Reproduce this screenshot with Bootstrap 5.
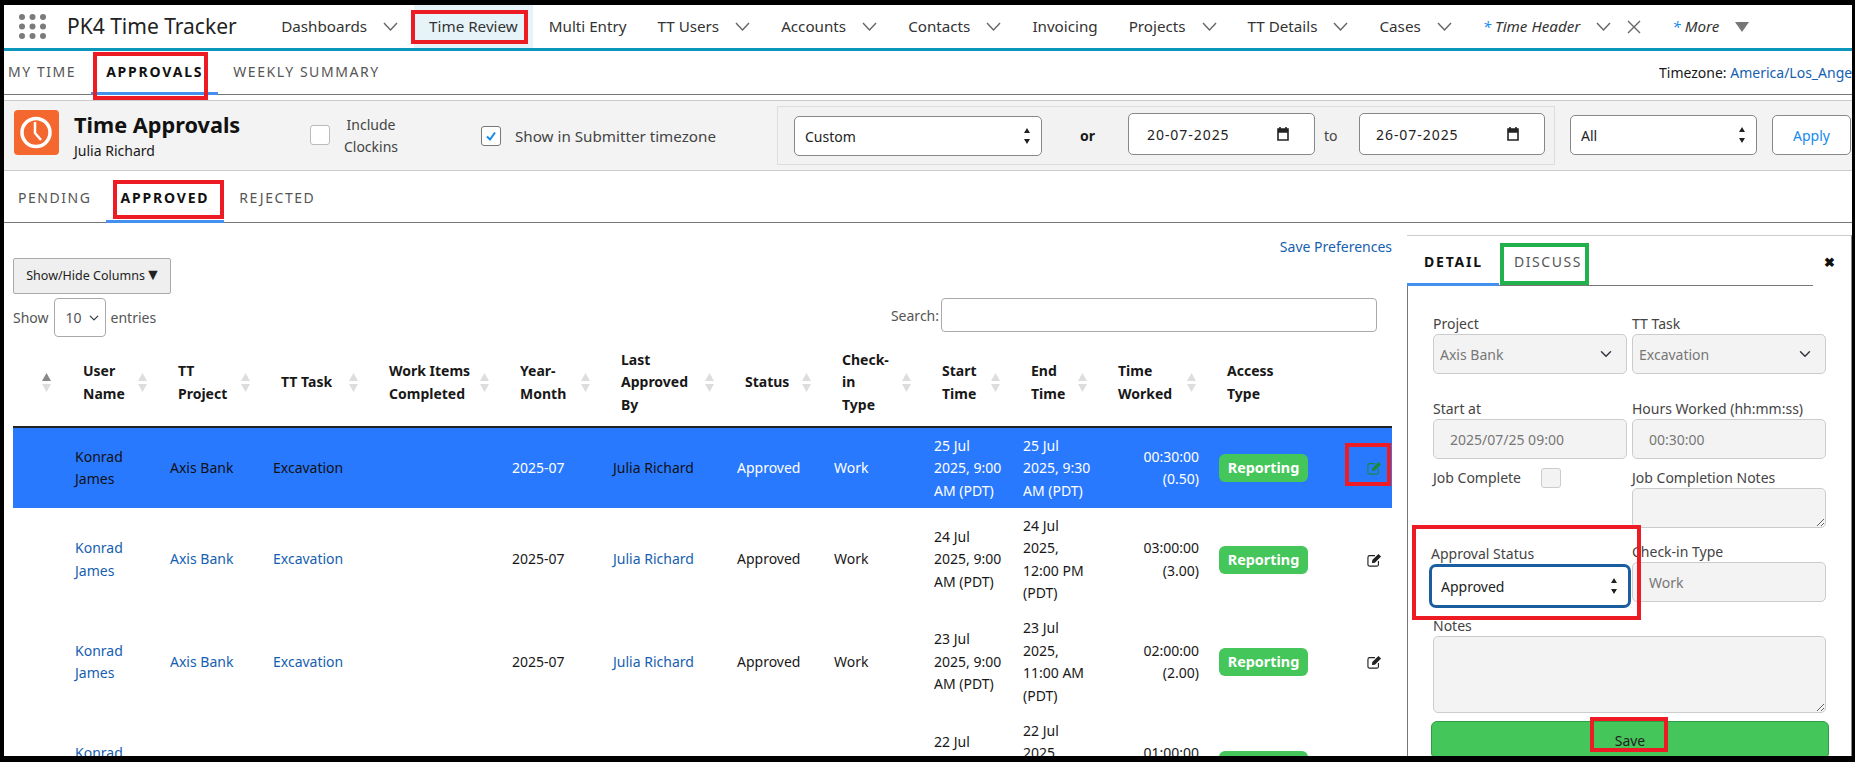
<!DOCTYPE html>
<html lang="en"><head><meta charset="utf-8"><title>PK4 Time Tracker</title>
<link href="https://cdn.jsdelivr.net/npm/bootstrap@5.3.0/dist/css/bootstrap.min.css" rel="stylesheet">
<script src="https://cdn.jsdelivr.net/npm/bootstrap@5.3.0/dist/js/bootstrap.bundle.min.js"></script>
<style>
html,body{height:762px;overflow:hidden;background:#000;}
body{font-family:"Noto Sans","Open Sans",sans-serif;font-size:14px;color:#181818;position:relative;}
a{color:#1560b0;text-decoration:none;}
.tt-frame{margin:5px 3px 0 4px;height:751px;background:#fff;overflow:hidden;display:flex;flex-direction:column;}
.tt-nav{height:46px;flex:none;border-bottom:3px solid #0a97ba;padding:0;flex-wrap:nowrap;justify-content:flex-start;}
.tt-dots{margin-left:15px;width:27px;height:25px;color:#7b7b7b;flex:none;}
.tt-brand{font-size:21px;margin:0 29px 0 21px;color:#222;line-height:1;white-space:nowrap;}
.tt-item{display:flex;align-items:center;height:43px;padding:0 15.5px;font-size:15.2px;color:#333;white-space:nowrap;}
.tt-item.tt-active{background:#e6f3f8;}
.tt-item svg{flex:none;}
.tt-chev{width:15px;height:9px;margin-left:16px;color:#666;}
.tt-item em .tt-star{color:#1589ee;}
.tt-tabs{flex:none;display:flex;align-items:stretch;background:#fff;border-bottom:1px solid #777;}
.tt-tab{display:flex;align-items:center;font-size:14px;letter-spacing:1.55px;color:#555;white-space:nowrap;border-bottom:3px solid transparent;margin-bottom:-1px;padding-left:15px;padding-right:15px;}
.tt-tab.tt-on{font-weight:700;color:#111;border-bottom-color:#4390ee;letter-spacing:1.8px;}
.tt-main-tabs{height:44px;}
.tt-main-tabs .tt-tab:first-child{padding-left:4px;}
.tt-tz{margin-left:auto;width:193px;overflow:hidden;white-space:nowrap;align-self:center;font-size:14px;}
.tt-band{flex:none;height:71px;margin-top:5px;background:#f3f3f3;border-top:1px solid #ccc;border-bottom:1px solid #ccc;display:flex;align-items:flex-start;}
.tt-logo{width:45px;height:45px;margin:9px 0 0 10px;flex:none;}
.tt-titleblk{width:236px;margin:10px 0 0 15px;flex:none;}
.tt-title{font-size:21.7px;font-weight:700;line-height:28px;color:#111;margin:0;}
.tt-sub{font-size:14px;line-height:19px;margin-top:2px;}
.tt-chk{width:20px;height:20px;background:#fff;border:1px solid #bbb;border-radius:3px;flex:none;display:flex;align-items:center;justify-content:center;}
.tt-chk1{margin-top:24px;}
.tt-inc{width:80px;text-align:center;margin:13px 71px 0 0;padding-left:2px;font-size:14px;line-height:22px;flex:none;color:#444;}
.tt-chk2{margin-top:25px;border-color:#777;}
.tt-show{margin:25px 59px 0 14px;width:203px;font-size:15.2px;line-height:20px;color:#444;white-space:nowrap;flex:none;}
.tt-box{width:778px;height:59px;margin-top:5px;border:1px solid #ddd;flex:none;display:flex;align-items:flex-start;background:#f2f2f2;}
.form-select.tt-ctl,.form-control.tt-ctl{font-size:14px;color:#222;border:1px solid #888;border-radius:5px;padding:0 10px;height:40px;box-shadow:none;}
.form-select.tt-spin{background-image:url("data:image/svg+xml,%3Csvg xmlns='http://www.w3.org/2000/svg' viewBox='0 0 8 18'%3E%3Cpath d='M4 1l3 5H1zM4 17l3-5H1z' fill='%23222'/%3E%3C/svg%3E");background-size:8px 18px;background-position:right 10px center;}
.tt-date{background-image:url("data:image/svg+xml,%3Csvg xmlns='http://www.w3.org/2000/svg' viewBox='0 0 12 14'%3E%3Cpath d='M1 2h10v11H1zM1 2v3h10V2M3 0v2M9 0v2' fill='none' stroke='%23222' stroke-width='1.6'/%3E%3Crect x='1' y='2' width='10' height='3' fill='%23222'/%3E%3C/svg%3E");background-repeat:no-repeat;background-size:12px 14px;background-position:right 25px center;}
.tt-custom{width:248px;margin:9px 0 0 16px;flex:none;}
.tt-or{width:86px;padding-left:5px;text-align:center;font-weight:700;margin-top:18px;flex:none;font-size:14px;}
.form-control.tt-d1{width:187px;height:42px;margin-top:6px;flex:none;padding-left:18px;letter-spacing:.95px;}
.tt-to{width:44px;padding-left:9px;margin-top:18px;flex:none;color:#444;}
.form-control.tt-d2{width:186px;height:42px;margin-top:6px;flex:none;padding-left:16px;letter-spacing:.95px;}
.tt-all{width:187px;margin:14px 0 0 15px;flex:none;}
.btn.tt-apply{width:79px;height:40px;margin:14px 0 0 15px;background:#fff;border:1px solid #888;border-radius:5px;font-size:14px;color:#1589ee;padding:0;flex:none;}
.tt-sub-tabs{height:52px;}
.tt-sub-tabs .tt-tab{padding-top:4px;}
.tt-sub-tabs .tt-tab:first-child{padding-left:14px;padding-right:14px;}
.tt-content{flex:1 1 auto;min-height:0;display:flex;overflow:hidden;}
.tt-left{width:1388px;padding-left:9px;flex:none;}
.tt-savep{height:35px;padding-top:14px;text-align:right;line-height:20px;font-size:14px;}
.btn.tt-cols{width:158px;height:36px;background:#efefef;border:1px solid #aaa;border-radius:2px;font-size:12.500px;color:#222;padding:0 0 0 3px;white-space:nowrap;display:block;}
.tt-tri{font-size:16px;line-height:1;}
.tt-lenrow{height:41px;margin-top:4px;display:flex;align-items:flex-start;color:#555;}
.tt-lenrow label{display:flex;align-items:center;gap:5px;}
.form-select.tt-len{width:52px;height:39px;border:1px solid #aaa;border-radius:4px;font-size:14px;padding:0 0 0 11px;color:#555;background-position:right 4px center;background-size:14px 10px;box-shadow:none;}
.form-control.tt-search{width:436px;height:34px;border:1px solid #aaa;border-radius:4px;margin-left:0;box-shadow:none;}
.tt-lenrow label.tt-findlbl{margin-left:auto;margin-right:15px;height:34px;gap:2px;}
.tt-table-in{table-layout:fixed;width:1379px;margin:0;--bs-table-bg:transparent;color:#181818;}
.table.tt-table-in>thead>tr>th{padding:10px 13px 10px 18px;font-size:14px;font-weight:700;line-height:22.4px;vertical-align:middle;border-bottom:2px solid #222;}
.table.tt-table-in>thead>tr>th.tt-sortonly{padding:10px 14px 10px 0;}
.table.tt-table-in>tbody>tr>td{padding:6.3px 10px;line-height:22.5px;vertical-align:middle;border:0;font-size:14px;white-space:nowrap;}
.table.tt-table-in>tbody>tr.tt-sel>td{background:#2979ff;color:#fff;}
.tt-sel a{color:#111;}
.tt-hd{display:flex;align-items:center;justify-content:space-between;}
.tt-sort{flex:none;width:9px;height:19px;color:#ddd;}
.tt-rep{display:inline-block;background:#45c65a;color:#fff;font-weight:700;border-radius:6px;height:28px;line-height:28px;width:89px;text-align:center;font-size:14.4px;}
.tt-edit{width:15px;height:14px;color:#222;display:block;margin-left:auto;}
.tt-sel .tt-edit{color:#1a8a3c;}
.tt-panel{width:445px;margin:12px 0 0 15px;flex:none;border-top:1px solid #ccc;border-right:1px solid #888;position:relative;}
.tt-ptabs{height:50px;margin-right:38px;}
.tt-ptabs .tt-tab{padding:3px 16px 0 17px;}
.tt-ptabs .tt-tab+.tt-tab{padding-left:15px;}
.tt-close{position:absolute;right:16px;top:16px;font-size:13px;font-weight:700;line-height:20px;color:#111;}
.tt-pbody{border-left:1px solid #777;padding:27px 25px 0 25px;height:480px;}
.tt-fg{display:grid;grid-template-columns:194px 194px;column-gap:5px;}
.tt-fg label{display:block;color:#444;font-size:14px;line-height:21px;white-space:nowrap;}
.form-control.tt-dis,.form-select.tt-dis{background-color:#f3f3f3;border:1px solid #ccc;border-radius:5px;color:#777;font-size:14px;height:40px;opacity:1;padding:0 6px;box-shadow:none;}
.form-control.tt-dis.tt-ind{padding-left:16px;}
.form-control.tt-notes{resize:vertical;}
.tt-jc{display:flex;align-items:flex-start;}
.tt-jc .tt-chk{background:#f3f3f3;border-color:#ccc;margin:1px 0 0 20px;}
.form-select.tt-appr{width:202px;height:44px;margin-left:-4px;border:3px solid #1b5e9f;border-radius:7px;font-size:14px;color:#222;padding:0 9px;box-shadow:none;}
.tt-fg label.tt-applbl{margin-left:-2px;margin-top:15px;}
.tt-rowgap{margin-top:13px;}
.tt-noteslbl{color:#444;line-height:20px;display:block;}
.form-control.tt-nh{height:77px;}
.btn.tt-save{width:398px;height:38px;margin:8px 0 0 -2px;background:#45c65a;border:1px solid #2f9e44;border-radius:6px;color:#222;font-size:14px;display:block;padding:0;}
.tt-ann{position:absolute;border:4px solid #ed1c24;pointer-events:none;}
.tt-ann.tt-green{border-color:#22b14c;}
</style></head>
<body>
<div class="tt-frame">
  <nav class="navbar tt-nav">
    <svg class="tt-dots" viewBox="0 0 27 25" fill="currentColor"><circle cx="3" cy="3" r="3"/><circle cx="13.500" cy="3" r="3"/><circle cx="24" cy="3" r="3"/><circle cx="3" cy="12.500" r="3"/><circle cx="13.500" cy="12.500" r="3"/><circle cx="24" cy="12.500" r="3"/><circle cx="3" cy="22" r="3"/><circle cx="13.500" cy="22" r="3"/><circle cx="24" cy="22" r="3"/></svg>
    <span class="tt-brand">PK4 Time Tracker</span>
    <a class="tt-item" href="#">Dashboards<svg class="tt-chev" viewBox="0 0 15 9" fill="none" stroke="currentColor" stroke-width="1.4"><path d="M1 1l6.500 7L14 1"/></svg></a>
    <a class="tt-item tt-active" href="#">Time Review</a>
    <a class="tt-item" href="#">Multi Entry</a>
    <a class="tt-item" href="#">TT Users<svg class="tt-chev" viewBox="0 0 15 9" fill="none" stroke="currentColor" stroke-width="1.4"><path d="M1 1l6.500 7L14 1"/></svg></a>
    <a class="tt-item" href="#">Accounts<svg class="tt-chev" viewBox="0 0 15 9" fill="none" stroke="currentColor" stroke-width="1.4"><path d="M1 1l6.500 7L14 1"/></svg></a>
    <a class="tt-item" href="#">Contacts<svg class="tt-chev" viewBox="0 0 15 9" fill="none" stroke="currentColor" stroke-width="1.4"><path d="M1 1l6.500 7L14 1"/></svg></a>
    <a class="tt-item" href="#">Invoicing</a>
    <a class="tt-item" href="#">Projects<svg class="tt-chev" viewBox="0 0 15 9" fill="none" stroke="currentColor" stroke-width="1.4"><path d="M1 1l6.500 7L14 1"/></svg></a>
    <a class="tt-item" href="#">TT Details<svg class="tt-chev" viewBox="0 0 15 9" fill="none" stroke="currentColor" stroke-width="1.4"><path d="M1 1l6.500 7L14 1"/></svg></a>
    <a class="tt-item" href="#">Cases<svg class="tt-chev" viewBox="0 0 15 9" fill="none" stroke="currentColor" stroke-width="1.4"><path d="M1 1l6.500 7L14 1"/></svg></a>
    <a class="tt-item" href="#"><em><span class="tt-star">*</span> Time Header</em><svg class="tt-chev" viewBox="0 0 15 9" fill="none" stroke="currentColor" stroke-width="1.4"><path d="M1 1l6.500 7L14 1"/></svg><svg class="ms-3" width="14" height="14" viewBox="0 0 14 14" fill="none" stroke="#666" stroke-width="1.4"><path d="M1 1l12 12M13 1L1 13"/></svg></a>
    <a class="tt-item" href="#"><em><span class="tt-star">*</span> More</em><svg class="ms-3" width="14" height="10" viewBox="0 0 14 10" fill="#777"><path d="M0 0h14L7 10z"/></svg></a>
  </nav>
  <div class="tt-tabs tt-main-tabs">
    <a class="tt-tab" href="#">MY TIME</a>
    <a class="tt-tab tt-on" href="#">APPROVALS</a>
    <a class="tt-tab" href="#">WEEKLY SUMMARY</a>
    <div class="tt-tz">Timezone: <a href="#">America/Los_Angeles</a></div>
  </div>
  <div class="tt-band">
    <svg class="tt-logo" viewBox="0 0 45 45"><rect width="45" height="45" rx="4" fill="#f4672f"/><circle cx="22" cy="22.500" r="14" fill="none" stroke="#fff" stroke-width="3.500"/><path d="M21 12v11l6 7" fill="none" stroke="#fff" stroke-width="2.500"/></svg>
    <div class="tt-titleblk"><h1 class="tt-title">Time Approvals</h1><div class="tt-sub">Julia Richard</div></div>
    <span class="tt-chk tt-chk1"></span>
    <div class="tt-inc">Include<br>Clockins</div>
    <span class="tt-chk tt-chk2"><svg width="12" height="12" viewBox="0 0 12 12" fill="none" stroke="#1589ee" stroke-width="2"><path d="M2 6.500l3 3 5-7"/></svg></span>
    <div class="tt-show">Show in Submitter timezone</div>
    <div class="tt-box">
      <select class="form-select tt-ctl tt-spin tt-custom"><option>Custom</option></select>
      <div class="tt-or">or</div>
      <input class="form-control tt-ctl tt-date tt-d1" type="text" value="20-07-2025">
      <div class="tt-to">to</div>
      <input class="form-control tt-ctl tt-date tt-d2" type="text" value="26-07-2025">
    </div>
    <select class="form-select tt-ctl tt-spin tt-all"><option>All</option></select>
    <button class="btn tt-apply" type="button">Apply</button>
  </div>
  <div class="tt-tabs tt-sub-tabs">
    <a class="tt-tab" href="#">PENDING</a>
    <a class="tt-tab tt-on" href="#">APPROVED</a>
    <a class="tt-tab" href="#">REJECTED</a>
  </div>
  <div class="tt-content">
    <div class="tt-left">
      <div class="tt-savep"><a href="#">Save Preferences</a></div>
      <button class="btn tt-cols" type="button">Show/Hide Columns<span class="tt-tri">▼</span></button>
      <div class="tt-lenrow">
        <label>Show <select class="form-select tt-len"><option>10</option></select> entries</label>
        <label class="tt-findlbl">Search:<input class="form-control tt-search" type="text"></label>
      </div>
      <table class="table tt-table-in">
        <colgroup><col style="width:52px"><col style="width:95px"><col style="width:103px"><col style="width:108px"><col style="width:131px"><col style="width:101px"><col style="width:124px"><col style="width:97px"><col style="width:100px"><col style="width:89px"><col style="width:87px"><col style="width:109px"><col style="width:126px"><col style="width:57px"></colgroup>
        <thead><tr>
          <th class="tt-sortonly"><div class="tt-hd"><span></span><svg class="tt-sort" viewBox="0 0 9 19"><path d="M4.500 0L9 8H0z" fill="#888"/><path d="M4.500 19L9 11H0z" fill="#ddd"/></svg></div></th>
          <th><div class="tt-hd"><span>User<br>Name</span><svg class="tt-sort" viewBox="0 0 9 19" fill="currentColor"><path d="M4.500 0L9 8H0zM4.500 19L9 11H0z"/></svg></div></th>
          <th><div class="tt-hd"><span>TT<br>Project</span><svg class="tt-sort" viewBox="0 0 9 19" fill="currentColor"><path d="M4.500 0L9 8H0zM4.500 19L9 11H0z"/></svg></div></th>
          <th><div class="tt-hd"><span>TT Task</span><svg class="tt-sort" viewBox="0 0 9 19" fill="currentColor"><path d="M4.500 0L9 8H0zM4.500 19L9 11H0z"/></svg></div></th>
          <th><div class="tt-hd"><span>Work Items<br>Completed</span><svg class="tt-sort" viewBox="0 0 9 19" fill="currentColor"><path d="M4.500 0L9 8H0zM4.500 19L9 11H0z"/></svg></div></th>
          <th><div class="tt-hd"><span>Year-<br>Month</span><svg class="tt-sort" viewBox="0 0 9 19" fill="currentColor"><path d="M4.500 0L9 8H0zM4.500 19L9 11H0z"/></svg></div></th>
          <th><div class="tt-hd"><span>Last<br>Approved<br>By</span><svg class="tt-sort" viewBox="0 0 9 19" fill="currentColor"><path d="M4.500 0L9 8H0zM4.500 19L9 11H0z"/></svg></div></th>
          <th><div class="tt-hd"><span>Status</span><svg class="tt-sort" viewBox="0 0 9 19" fill="currentColor"><path d="M4.500 0L9 8H0zM4.500 19L9 11H0z"/></svg></div></th>
          <th><div class="tt-hd"><span>Check-<br>in<br>Type</span><svg class="tt-sort" viewBox="0 0 9 19" fill="currentColor"><path d="M4.500 0L9 8H0zM4.500 19L9 11H0z"/></svg></div></th>
          <th><div class="tt-hd"><span>Start<br>Time</span><svg class="tt-sort" viewBox="0 0 9 19" fill="currentColor"><path d="M4.500 0L9 8H0zM4.500 19L9 11H0z"/></svg></div></th>
          <th><div class="tt-hd"><span>End<br>Time</span><svg class="tt-sort" viewBox="0 0 9 19" fill="currentColor"><path d="M4.500 0L9 8H0zM4.500 19L9 11H0z"/></svg></div></th>
          <th><div class="tt-hd"><span>Time<br>Worked</span><svg class="tt-sort" viewBox="0 0 9 19" fill="currentColor"><path d="M4.500 0L9 8H0zM4.500 19L9 11H0z"/></svg></div></th>
          <th><div class="tt-hd"><span>Access<br>Type</span></div></th>
          <th></th>
        </tr></thead>
        <tbody>
          <tr class="tt-sel"><td></td><td><a href="#">Konrad<br>James</a></td><td><a href="#">Axis Bank</a></td><td><a href="#">Excavation</a></td><td></td><td>2025-07</td><td><a href="#">Julia Richard</a></td><td>Approved</td><td>Work</td><td>25 Jul<br>2025, 9:00<br>AM (PDT)</td><td>25 Jul<br>2025, 9:30<br>AM (PDT)</td><td class="text-end">00:30:00<br>(0.50)</td><td><span class="tt-rep">Reporting</span></td><td><svg class="tt-edit" viewBox="0 0 17 16"><path d="M13 9v4a2 2 0 0 1-2 2H3a2 2 0 0 1-2-2V5a2 2 0 0 1 2-2h6" fill="none" stroke="currentColor" stroke-width="1.300"/><path d="M6 8l7-7 3 3-7 7-3.500.5z" fill="currentColor"/></svg></td></tr>
          <tr><td></td><td><a href="#">Konrad<br>James</a></td><td><a href="#">Axis Bank</a></td><td><a href="#">Excavation</a></td><td></td><td>2025-07</td><td><a href="#">Julia Richard</a></td><td>Approved</td><td>Work</td><td>24 Jul<br>2025, 9:00<br>AM (PDT)</td><td>24 Jul<br>2025,<br>12:00 PM<br>(PDT)</td><td class="text-end">03:00:00<br>(3.00)</td><td><span class="tt-rep">Reporting</span></td><td><svg class="tt-edit" viewBox="0 0 17 16"><path d="M13 9v4a2 2 0 0 1-2 2H3a2 2 0 0 1-2-2V5a2 2 0 0 1 2-2h6" fill="none" stroke="currentColor" stroke-width="1.300"/><path d="M6 8l7-7 3 3-7 7-3.500.5z" fill="currentColor"/></svg></td></tr>
          <tr><td></td><td><a href="#">Konrad<br>James</a></td><td><a href="#">Axis Bank</a></td><td><a href="#">Excavation</a></td><td></td><td>2025-07</td><td><a href="#">Julia Richard</a></td><td>Approved</td><td>Work</td><td>23 Jul<br>2025, 9:00<br>AM (PDT)</td><td>23 Jul<br>2025,<br>11:00 AM<br>(PDT)</td><td class="text-end">02:00:00<br>(2.00)</td><td><span class="tt-rep">Reporting</span></td><td><svg class="tt-edit" viewBox="0 0 17 16"><path d="M13 9v4a2 2 0 0 1-2 2H3a2 2 0 0 1-2-2V5a2 2 0 0 1 2-2h6" fill="none" stroke="currentColor" stroke-width="1.300"/><path d="M6 8l7-7 3 3-7 7-3.500.5z" fill="currentColor"/></svg></td></tr>
          <tr><td></td><td><a href="#">Konrad<br>James</a></td><td><a href="#">Axis Bank</a></td><td><a href="#">Excavation</a></td><td></td><td>2025-07</td><td><a href="#">Julia Richard</a></td><td>Approved</td><td>Work</td><td>22 Jul<br>2025, 9:00<br>AM (PDT)</td><td>22 Jul<br>2025,<br>10:00 AM<br>(PDT)</td><td class="text-end">01:00:00<br>(1.00)</td><td><span class="tt-rep">Reporting</span></td><td><svg class="tt-edit" viewBox="0 0 17 16"><path d="M13 9v4a2 2 0 0 1-2 2H3a2 2 0 0 1-2-2V5a2 2 0 0 1 2-2h6" fill="none" stroke="currentColor" stroke-width="1.300"/><path d="M6 8l7-7 3 3-7 7-3.500.5z" fill="currentColor"/></svg></td></tr>
        </tbody>
      </table>
    </div>
    <aside class="tt-panel">
      <div class="tt-tabs tt-ptabs">
        <a class="tt-tab tt-on" href="#">DETAIL</a>
        <a class="tt-tab" href="#">DISCUSS</a>
      </div>
      <span class="tt-close">✖</span>
      <div class="tt-pbody">
        <div class="tt-fg">
          <div><label>Project</label><select class="form-select tt-dis" disabled><option>Axis Bank</option></select></div>
          <div><label>TT Task</label><select class="form-select tt-dis" disabled><option>Excavation</option></select></div>
          <div class="mt-4"><label>Start at</label><input class="form-control tt-dis tt-ind" disabled value="2025/07/25 09:00"></div>
          <div class="mt-4"><label>Hours Worked (hh:mm:ss)</label><input class="form-control tt-dis tt-ind" disabled value="00:30:00"></div>
          <div class="tt-jc mt-2"><label>Job Complete</label><span class="tt-chk"></span></div>
          <div class="mt-2"><label>Job Completion Notes</label><textarea class="form-control tt-dis" disabled></textarea></div>
          <div><label class="tt-applbl">Approval Status</label><select class="form-select tt-spin tt-appr"><option>Approved</option></select></div>
          <div class="tt-rowgap"><label>Check-in Type</label><input class="form-control tt-dis tt-ind" disabled value="Work"></div>
        </div>
        <div class="mt-2"><label class="tt-noteslbl">Notes</label><textarea class="form-control tt-dis tt-notes tt-nh w-100" readonly></textarea></div>
        <button class="btn tt-save" type="button">Save</button>
      </div>
    </aside>
  </div>
</div>
<div class="tt-ann" style="left:411px;top:10px;width:117px;height:34px"></div>
<div class="tt-ann" style="left:93px;top:52px;width:115px;height:48px"></div>
<div class="tt-ann" style="left:113px;top:180px;width:111px;height:39px"></div>
<div class="tt-ann" style="left:1345px;top:443px;width:46px;height:43px"></div>
<div class="tt-ann tt-green" style="left:1500px;top:243px;width:89px;height:42px"></div>
<div class="tt-ann" style="left:1412px;top:525px;width:229px;height:95px"></div>
<div class="tt-ann" style="left:1590px;top:717px;width:78px;height:35px"></div>
</body></html>
